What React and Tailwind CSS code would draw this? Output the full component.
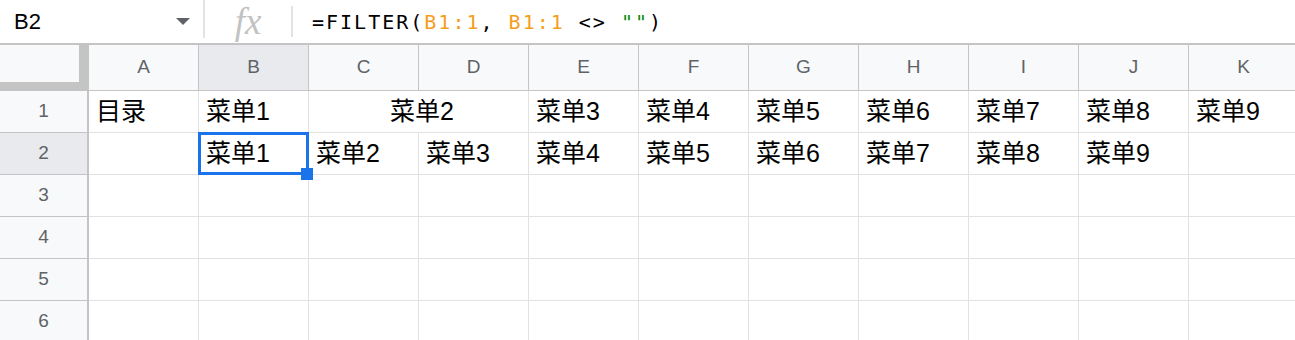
const COLS = ["A", "B", "C", "D", "E", "F", "G", "H", "I", "J", "K"];

const sans = { fontFamily: '"Liberation Sans", Arial, "Noto Sans CJK SC", sans-serif' };

function Cell({ text, span, children }) {
  return (
    <div
      className={`relative h-[42px] border-r border-b border-[#e2e2e2] flex items-center pl-[7px] text-[25px] text-black whitespace-nowrap ${span ? "col-span-2 justify-center pl-0" : ""}`}
      style={sans}
    >
      {text}
      {children}
    </div>
  );
}

function RowHead({ n, active }) {
  return (
    <div
      className={`h-[42px] border-r-2 border-b border-[#c4c4c4] flex items-center justify-center text-[19px] text-[#5f6368] ${active ? "bg-[#e8eaed]" : "bg-[#f8f9fa]"}`}
      style={sans}
    >
      {n}
    </div>
  );
}

export default function App() {
  const row1 = ["目录", "菜单1", null, "菜单3", "菜单4", "菜单5", "菜单6", "菜单7", "菜单8", "菜单9"];
  const row2 = ["", "菜单1", "菜单2", "菜单3", "菜单4", "菜单5", "菜单6", "菜单7", "菜单8", "菜单9", ""];

  return (
    <div className="w-[1295px] h-[340px] overflow-hidden bg-white">
      {/* formula bar */}
      <div className="flex items-center h-[45px] border-b-2 border-[#c4c4c4]">
        <div className="w-[203px] h-full flex items-center justify-between pl-[14px] pr-[13px]">
          <span className="text-[22px] text-black" style={sans}>B2</span>
          <svg width="14" height="7" viewBox="0 0 14 7">
            <path d="M0 0h14L7 7z" fill="#5f6368" />
          </svg>
        </div>
        <div className="w-[2px] h-[38px] self-start bg-[#e3e3e3]" />
        <div className="w-[86px] h-full flex items-center justify-center">
          <span
            className="text-[37px] italic text-[#c2c2c2] leading-[42px]"
            style={{ fontFamily: '"Liberation Serif", "Times New Roman", serif' }}
          >
            fx
          </span>
        </div>
        <div className="w-[2px] h-[31px] bg-[#e3e3e3]" />
        <div
          className="pl-[19px] text-[20px] tracking-[2px] text-black whitespace-pre"
          style={{ fontFamily: '"DejaVu Sans Mono", "Liberation Mono", monospace' }}
        >
          =FILTER(<span className="text-[#f59e1b]">B1:1</span>, <span className="text-[#f59e1b]">B1:1</span> {"<>"} <span className="text-[#0b8a0b]">""</span>)
        </div>
      </div>

      {/* grid */}
      <div className="grid grid-cols-[89px_repeat(11,110px)]">
        <div className="h-[46px] bg-[#c4c4c4]">
          <div className="w-[79px] h-[37px] bg-[#f8f9fa]" />
        </div>
        {COLS.map((c) => (
          <div
            key={c}
            className={`h-[46px] border-r border-b border-[#c4c4c4] flex items-center justify-center text-[19px] text-[#5f6368] ${c === "B" ? "bg-[#e8eaed]" : "bg-[#f8f9fa]"}`}
            style={sans}
          >
            {c}
          </div>
        ))}

        <RowHead n={1} />
        {row1.map((t, i) =>
          i === 2 ? null : i === 1 ? (
            <>
              <Cell key={i} text={t} />
              <Cell key="m" text="菜单2" span />
            </>
          ) : (
            <Cell key={i} text={t} />
          )
        )}

        <RowHead n={2} active />
        {row2.map((t, i) =>
          i === 1 ? (
            <Cell key={i} text={t}>
              <div className="absolute -left-[1px] -top-[1px] -right-[1px] -bottom-[1px] border-[3px] border-[#1a73e8] pointer-events-none" />
              <div className="absolute -right-[5px] -bottom-[6px] w-[12px] h-[12px] bg-[#1a73e8] z-10" />
            </Cell>
          ) : (
            <Cell key={i} text={t} />
          )
        )}

        {[3, 4, 5, 6].map((n) => (
          <>
            <RowHead key={"h" + n} n={n} />
            {COLS.map((c) => (
              <Cell key={c + n} text="" />
            ))}
          </>
        ))}
      </div>
    </div>
  );
}
